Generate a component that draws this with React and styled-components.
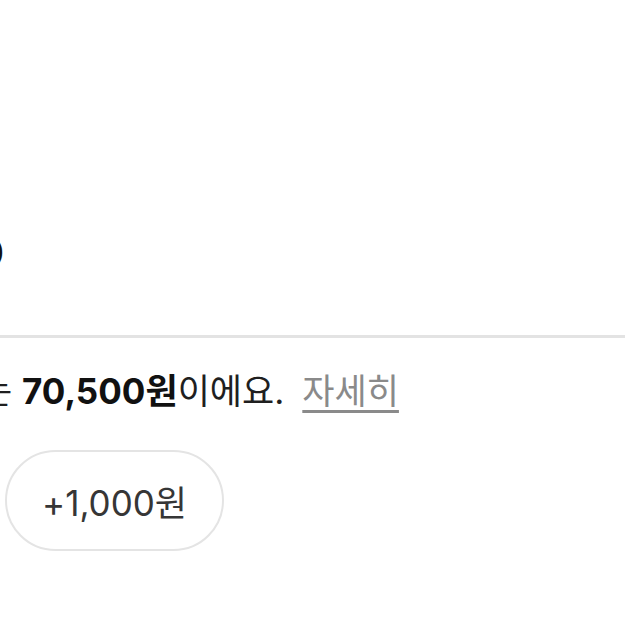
import React from 'react'
import styled, { createGlobalStyle } from 'styled-components'

const ink = '#1a1a1a'
const line = '#e3e3e3'
const muted = '#8a8a8a'

const GlobalStyle = createGlobalStyle`
  html, body {
    margin: 0;
    padding: 0;
    background: #ffffff;
  }
  body {
    font-family: Inter, "Noto Sans CJK KR", sans-serif;
    color: ${ink};
  }
`

const Page = styled.div`
  width: 625px;
  height: 625px;
  overflow: hidden;
  display: flex;
  flex-direction: column;
`

const Bleed = styled.div`
  width: ${p => p.$width}px;
  flex-shrink: 0;
  display: flex;
  justify-content: flex-end;
  white-space: nowrap;
`

const PriceHead = styled.div`
  display: flex;
  margin-top: 226px;
  height: 52px;
  align-items: center;
  font-size: 40px;
  font-weight: 700;
  color: #111;
`

const Divider = styled.hr`
  margin: 57px 0 0;
  border: 0;
  height: 3px;
  background: ${line};
`

const Notice = styled.p`
  display: flex;
  align-items: center;
  margin: 30px 0 0;
  font-size: 35px;
  line-height: 46px;
  white-space: nowrap;
  color: #1f1f1f;
`

const Strong = styled.b`
  font-weight: 700;
  color: #111;
`

const More = styled.a`
  margin-left: 18px;
  color: ${muted};
  text-decoration: underline;
  text-decoration-thickness: 3px;
  text-underline-offset: 6px;
  cursor: pointer;
`

const Chips = styled.div`
  display: flex;
  gap: 12px;
  padding-left: 5px;
  margin-top: 36px;
`

const Chip = styled.button`
  height: 101px;
  padding: 0 35px;
  border: 2px solid #e4e4e4;
  border-radius: 51px;
  background: #fff;
  font-family: inherit;
  font-size: 35px;
  color: #363636;
  cursor: pointer;
`

export default function App() {
  return (
    <Page>
      <GlobalStyle />
      <PriceHead>
        <Bleed $width={4}>71,000</Bleed>
      </PriceHead>
      <Divider />
      <Notice>
        <Bleed $width={22}>최근 거래가는&nbsp;</Bleed>
        <span>
          <Strong>70,500원</Strong>이에요.
        </span>
        <More>자세히</More>
      </Notice>
      <Chips>
        <Chip>+1,000원</Chip>
      </Chips>
    </Page>
  )
}
